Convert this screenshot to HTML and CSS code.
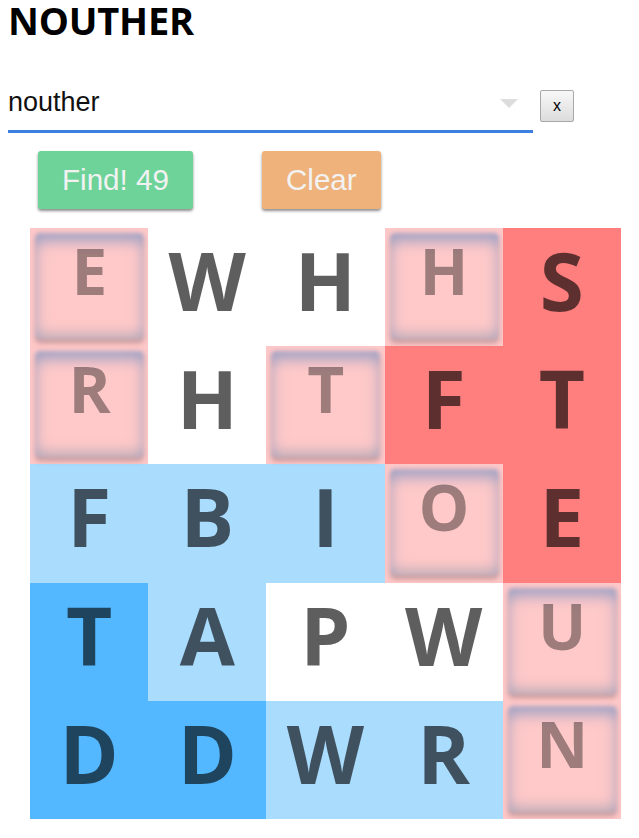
FILE: index.html
```html
<!DOCTYPE html>
<html>
<head>
<meta charset="utf-8">
<title>NOUTHER</title>
<link rel="stylesheet" href="styles.css">
</head>
<body>
<h1 class="title">NOUTHER</h1>
<div class="search-row">
  <div class="combo">
    <span class="combo-text">nouther</span>
    <span class="combo-arrow"></span>
  </div>
  <button class="clear-x">x</button>
</div>
<div class="actions">
  <button class="btn btn-find">Find! 49</button>
  <button class="btn btn-clear">Clear</button>
</div>
<div class="board">
  <div class="cell sel"><div class="tile"><span class="tile-letter">E</span></div></div>
  <div class="cell white"><span class="letter">W</span></div>
  <div class="cell white"><span class="letter">H</span></div>
  <div class="cell sel"><div class="tile"><span class="tile-letter">H</span></div></div>
  <div class="cell red"><span class="letter">S</span></div>

  <div class="cell sel"><div class="tile"><span class="tile-letter">R</span></div></div>
  <div class="cell white"><span class="letter">H</span></div>
  <div class="cell sel"><div class="tile"><span class="tile-letter">T</span></div></div>
  <div class="cell red"><span class="letter">F</span></div>
  <div class="cell red"><span class="letter">T</span></div>

  <div class="cell light"><span class="letter">F</span></div>
  <div class="cell light"><span class="letter">B</span></div>
  <div class="cell light"><span class="letter">I</span></div>
  <div class="cell sel"><div class="tile"><span class="tile-letter">O</span></div></div>
  <div class="cell red"><span class="letter">E</span></div>

  <div class="cell dark"><span class="letter">T</span></div>
  <div class="cell light"><span class="letter">A</span></div>
  <div class="cell white"><span class="letter">P</span></div>
  <div class="cell white"><span class="letter">W</span></div>
  <div class="cell sel"><div class="tile"><span class="tile-letter">U</span></div></div>

  <div class="cell dark"><span class="letter">D</span></div>
  <div class="cell dark"><span class="letter">D</span></div>
  <div class="cell light"><span class="letter">W</span></div>
  <div class="cell light"><span class="letter">R</span></div>
  <div class="cell sel"><div class="tile"><span class="tile-letter">N</span></div></div>
</div>
</body>
</html>
```

FILE: styles.css
```css
html, body {
  background: #ffffff;
}
body {
  margin: 8px;
  font-family: "Liberation Sans", Arial, sans-serif;
}
.title {
  margin: -6px 0 0 0;
  font-family: "Open Sans", sans-serif;
  font-weight: 700;
  font-size: 38px;
  line-height: 36px;
  color: #000;
  letter-spacing: -0.2px;
}
.search-row {
  display: flex;
  align-items: flex-start;
  margin-top: 49px;
}
.combo {
  position: relative;
  width: 525px;
  height: 43px;
  border-bottom: 3px solid #3b80e0;
}
.combo-text {
  display: block;
  font-size: 27px;
  line-height: 31px;
  color: #111;
}
.combo-arrow {
  position: absolute;
  right: 15px;
  top: 12px;
  width: 0;
  height: 0;
  border-left: 9px solid transparent;
  border-right: 9px solid transparent;
  border-top: 9px solid #dddddd;
}
.clear-x {
  margin-left: 7px;
  margin-top: 3px;
  width: 34px;
  height: 32px;
  border: 1px solid #a8a8a8;
  border-radius: 2px;
  background: linear-gradient(#f8f8f8, #dcdcdc);
  font-family: "Liberation Sans", Arial, sans-serif;
  font-size: 16px;
  color: #000;
  padding: 0;
}
.actions {
  display: flex;
  margin-top: 18px;
  padding-left: 30px;
  height: 58px;
}
.btn {
  height: 58px;
  padding: 0 24px;
  border: none;
  border-radius: 3px;
  font-family: "Liberation Sans", Arial, sans-serif;
  font-size: 29.6px;
  color: #f2f2f2;
  box-shadow: 0 2px 3px rgba(0, 0, 0, 0.45);
}
.btn-find {
  background: #6dd398;
}
.btn-clear {
  background: #efb27b;
  margin-left: 69px;
}
.board {
  display: grid;
  grid-template-columns: repeat(5, 118.2px);
  grid-template-rows: repeat(5, 118.2px);
  margin-top: 19px;
  margin-left: 22px;
  width: 591px;
  font-family: "Open Sans", sans-serif;
  font-weight: 700;
}
.cell {
  display: flex;
  justify-content: center;
  align-items: flex-start;
}
.letter {
  display: block;
  font-size: 80px;
  line-height: 92px;
  padding-top: 6px;
  color: rgba(0, 0, 0, 0.63);
}
.white { background: #ffffff; }
.light { background: #aadcfe; }
.dark { background: #53b8ff; }
.red { background: #ff7f7f; }
.sel {
  background: #ffc8c8;
  padding: 5px 4px 0 5px;
  justify-content: flex-start;
}
.tile {
  position: relative;
  width: 109px;
  height: 107px;
  text-align: center;
}
.tile::before {
  content: "";
  position: absolute;
  inset: 0;
  border-radius: 5px;
  background: #ffc9c9;
  box-shadow:
    inset 0 12px 14px -4px rgba(130, 150, 195, 0.7),
    inset 0 0 16px rgba(150, 160, 195, 0.5),
    inset 0 -12px 12px -6px rgba(165, 160, 170, 0.55),
    0 3px 3px rgba(90, 50, 50, 0.35);
  filter: blur(2px);
}
.tile-letter {
  position: relative;
  display: block;
  font-size: 64px;
  line-height: 76px;
  color: rgba(0, 0, 0, 0.38);
}
```
